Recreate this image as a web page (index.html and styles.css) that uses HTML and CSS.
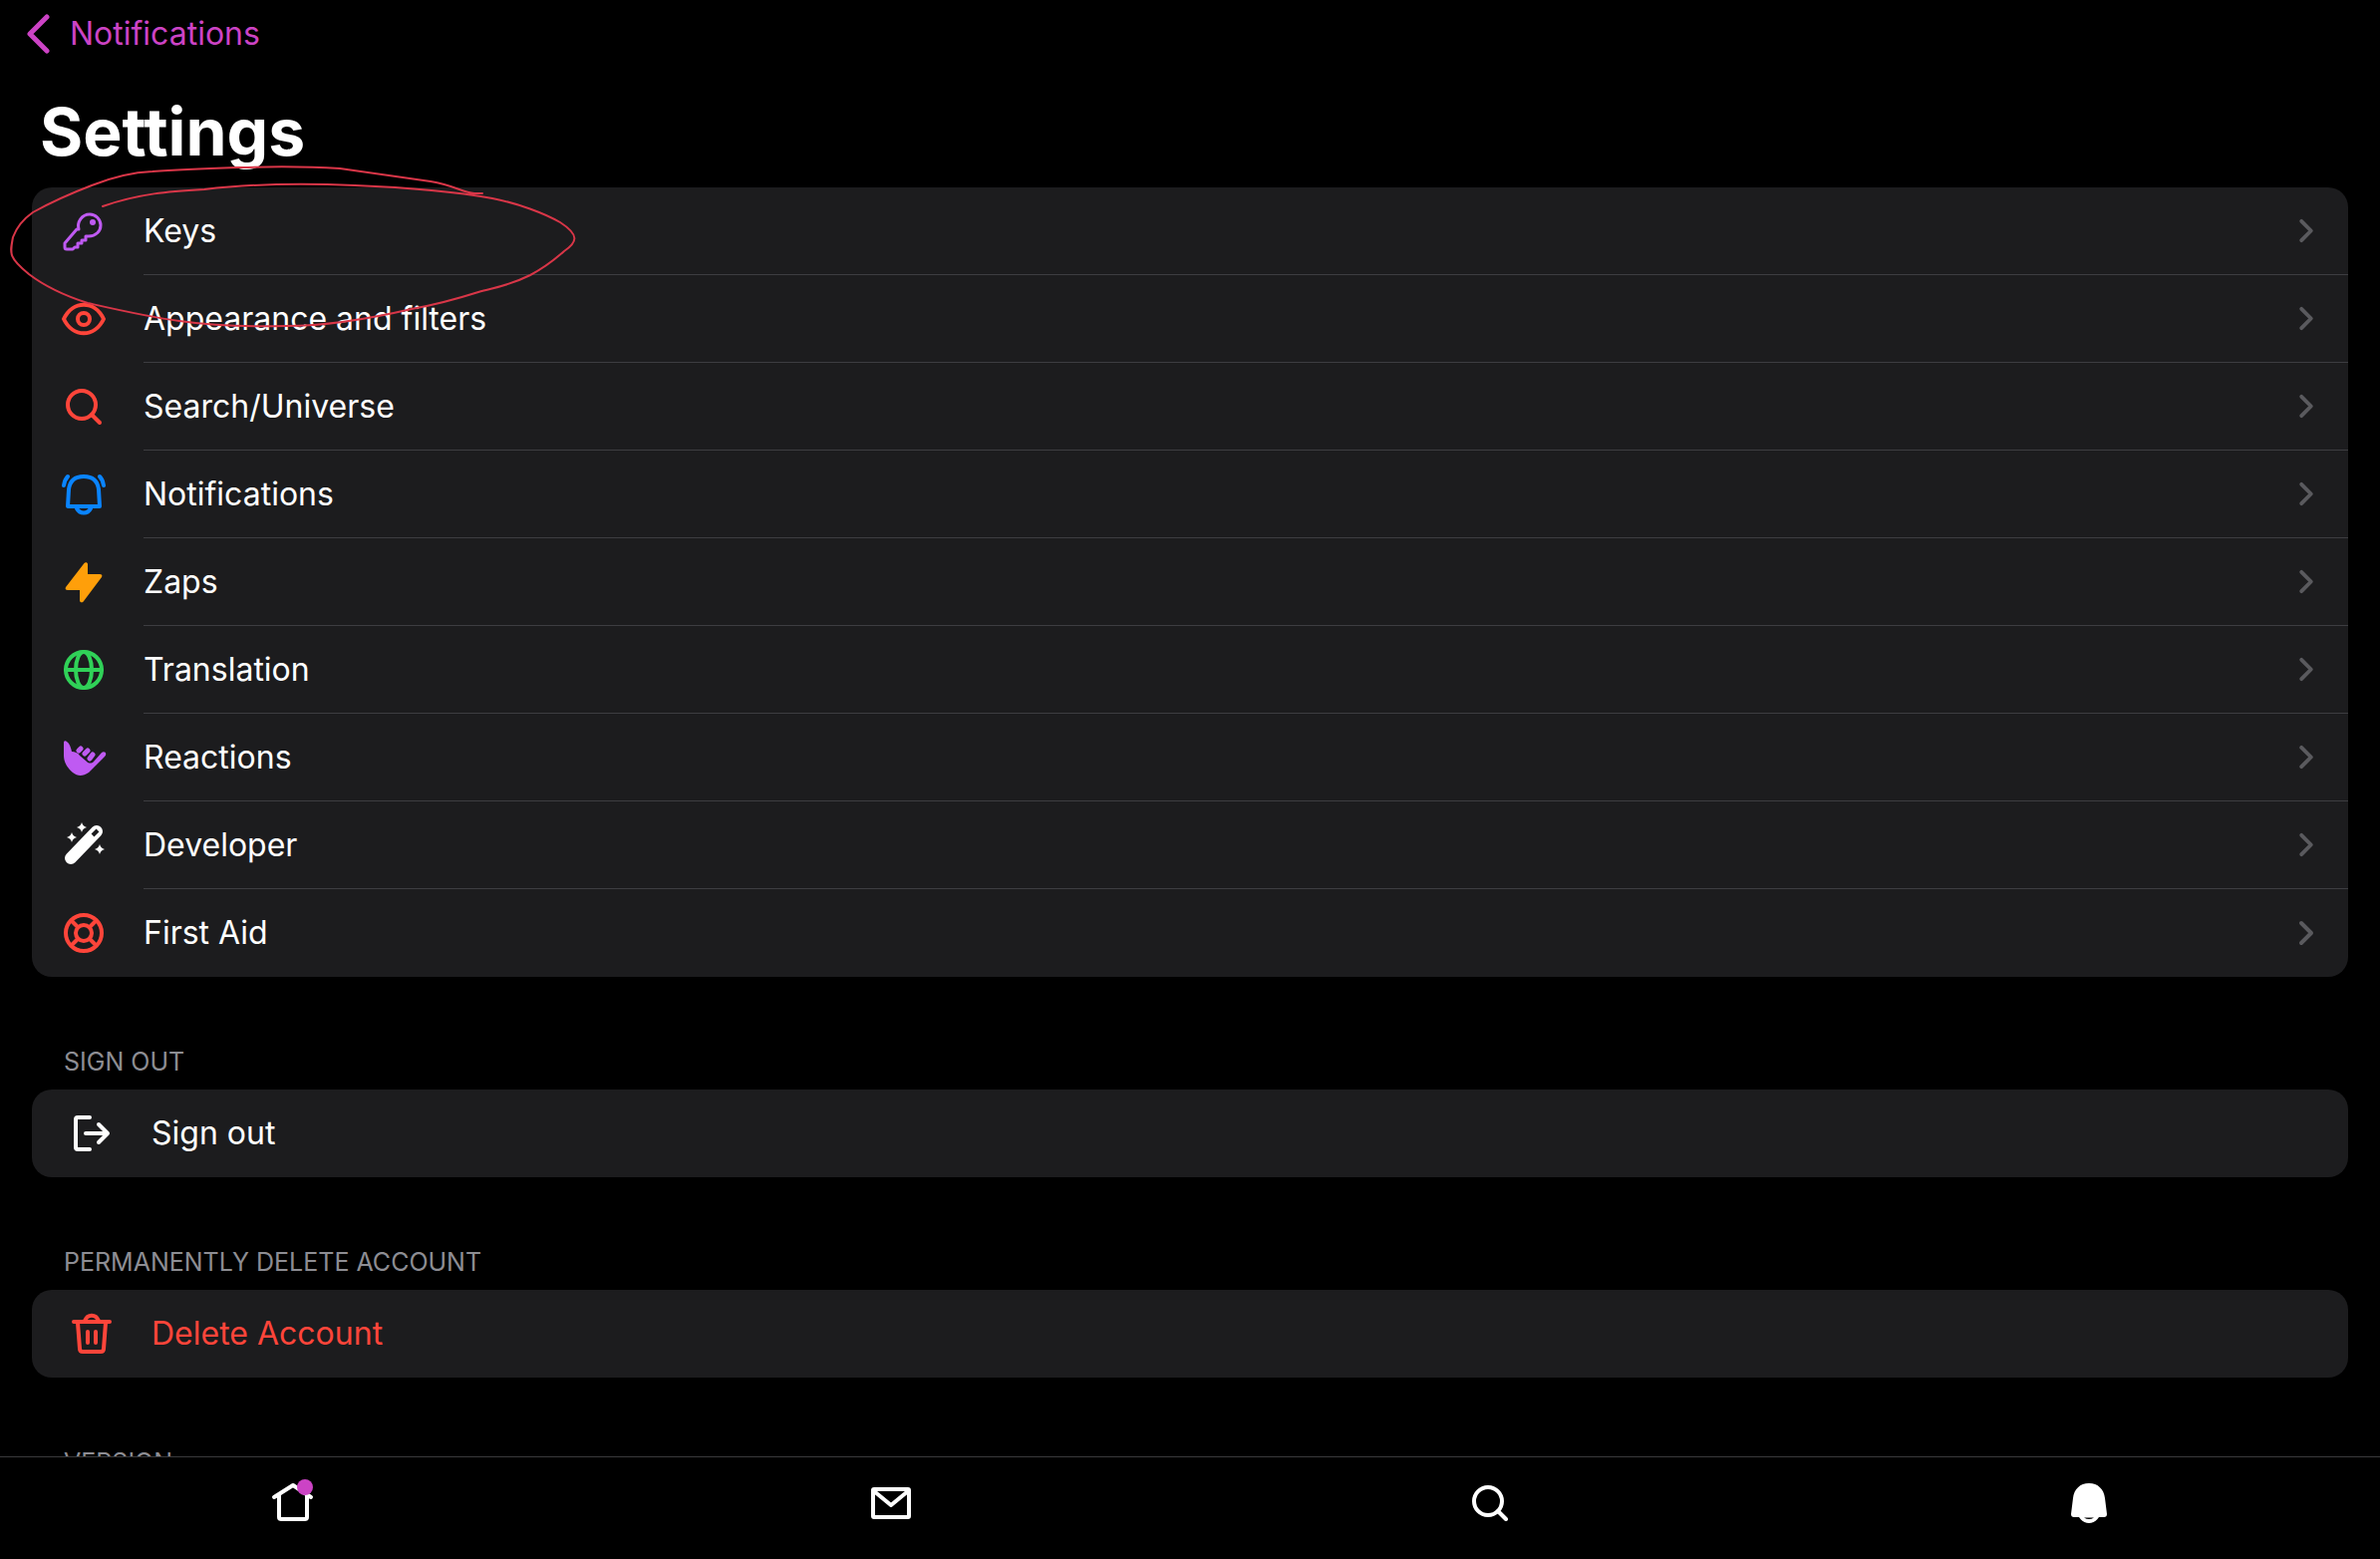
FILE: index.html
```html
<!DOCTYPE html>
<html lang="en">
<head>
  <meta charset="UTF-8">
  <meta name="viewport" content="width=device-width, initial-scale=1.0">
  <title>Settings</title>
  <link rel="stylesheet" href="styles.css">
</head>
<body>
  <!-- shared chevron -->
  <svg class="defs" aria-hidden="true">
    <symbol id="chevron" viewBox="0 0 16 26"><path d="M3 3l10 10L3 23" fill="none" stroke="currentColor" stroke-width="4" stroke-linecap="round" stroke-linejoin="round"/></symbol>
  </svg>

  <main class="content">
    <a class="back" href="#notifications">
      <svg class="back-icon" viewBox="0 0 24 40"><path d="M21 3L4 20l17 17"/></svg>
      Notifications
    </a>
    <h1>Settings</h1>

    <nav class="card" aria-label="Settings">
      <a class="row purple" href="#keys">
        <svg class="icon" viewBox="0 0 48 48"><path class="thin" d="M19 22c-2-7 3-15 11-15 6 0 11 5 11 11s-5 11-12 11l-3 0v4h-4v3h-4v4h-3l-2 2h-6q-2 0-2-2v-4l12-14z"/><circle class="fill" cx="33" cy="15" r="3"/></svg>
        <span class="label">Keys</span><svg class="chevron"><use href="#chevron"/></svg>
      </a>
      <a class="row red" href="#appearance">
        <svg class="icon" viewBox="0 0 48 48"><path d="M4 24C13 5 35 5 44 24 35 43 13 43 4 24z"/><circle cx="24" cy="24" r="6"/></svg>
        <span class="label">Appearance and filters</span><svg class="chevron"><use href="#chevron"/></svg>
      </a>
      <a class="row red" href="#search">
        <svg class="icon" viewBox="0 0 48 48"><circle cx="22" cy="22" r="14"/><path d="M32 32l8 8"/></svg>
        <span class="label">Search/Universe</span><svg class="chevron"><use href="#chevron"/></svg>
      </a>
      <a class="row blue" href="#alerts">
        <svg class="icon" viewBox="0 0 48 48"><path d="M24 6c-9 0-14 5-15 13L8 36h32l-1-17C38 11 33 6 24 6zM17 38c3 6 11 6 14 0M8 6q-3 3-4 9M40 6q3 3 4 9"/></svg>
        <span class="label">Notifications</span><svg class="chevron"><use href="#chevron"/></svg>
      </a>
      <a class="row orange" href="#zaps">
        <svg class="icon" viewBox="0 0 48 48"><path class="fill" d="M24.500 5c1-1.500 3.500-1 3.500 1v10h12c2 0 3 1 2 3L24 43c-1 2-4 1.500-4-.5V32H8c-2 0-3-1-2-3z"/></svg>
        <span class="label">Zaps</span><svg class="chevron"><use href="#chevron"/></svg>
      </a>
      <a class="row green" href="#translation">
        <svg class="icon" viewBox="0 0 48 48"><circle cx="24" cy="24" r="18"/><ellipse cx="24" cy="24" rx="8" ry="18"/><path d="M6 24h36"/></svg>
        <span class="label">Translation</span><svg class="chevron"><use href="#chevron"/></svg>
      </a>
      <a class="row purple" href="#reactions">
        <svg class="icon" viewBox="0 0 48 48"><path class="fill" d="M4 9c0-2 2-2 3-1 3 2 4 6 5 10 3 0 6 1 8 4l7 6c2 2 5 2 7 0l8-9c3-2 6 1 3 4L29 39c-6 4-11 4-16 0C5 32 4 26 4 21z"/><path class="finger" d="M19 17l2-2M25 20l3-3M30 25l3-4"/></svg>
        <span class="label">Reactions</span><svg class="chevron"><use href="#chevron"/></svg>
      </a>
      <a class="row" href="#developer">
        <svg class="icon" viewBox="0 0 48 48"><path class="wand" d="M11 37l26-27"/><path class="slot" d="M33 14l5-5"/><path class="fill" d="M22 1q1 4 5 5-4 1-5 5-1-4-5-5 4-1 5-5zM12 11q1 4 5 5-4 1-5 5-1-4-5-5 4-1 5-5zM40 23q1 4 5 5-4 1-5 5-1-4-5-5 4-1 5-5z"/></svg>
        <span class="label">Developer</span><svg class="chevron"><use href="#chevron"/></svg>
      </a>
      <a class="row red" href="#first-aid">
        <svg class="icon" viewBox="0 0 48 48"><circle cx="24" cy="24" r="18"/><circle cx="24" cy="24" r="8"/><path d="M12 12l6 6M36 12l-6 6M12 36l6-6M36 36l-6-6"/></svg>
        <span class="label">First Aid</span><svg class="chevron"><use href="#chevron"/></svg>
      </a>
    </nav>

    <h2>SIGN OUT</h2>
    <div class="card">
      <button class="row action" type="button">
        <svg class="icon" viewBox="0 0 48 48"><path d="M22 8H10q-2 0-2 2v28q0 2 2 2h12M18 24h22M31 15l9 9-9 9"/></svg>
        <span class="label">Sign out</span>
      </button>
    </div>

    <h2>PERMANENTLY DELETE ACCOUNT</h2>
    <div class="card">
      <button class="row action danger" type="button">
        <svg class="icon" viewBox="0 0 48 48"><path d="M6 12h36M17 11c3-7 11-7 14 0M10 13l2 26q0 3 3 3h18q3 0 3-3l2-26M20 22v11M28 22v11"/></svg>
        <span class="label">Delete Account</span>
      </button>
    </div>

    <h2>VERSION</h2>

    <!-- hand drawn circle around Keys -->
    <svg class="scribble" viewBox="0 0 600 350" aria-hidden="true"><path d="M103 207C140 194 170 192 205 190C255 184 310 184 356 186C405 188 455 192 494 199C520 204 546 214 562 223C582 236 579 243 566 252C557 260 545 269 532 276C510 287 498 288 480 293C458 300 435 306 413 310C370 320 330 327 287 327C250 328 215 327 180 322C149 318 119 311 88 304C66 297 46 288 29 275C8 258 10 254 13 238C17 227 23 220 33 213C51 203 71 194 92 186C112 178 130 173 153 172C182 170 212 169 241 168C275 167 309 167 341 169C371 173 402 178 432 182C456 186 464 193 476 194L484 194"/></svg>
  </main>

  <footer class="tabbar">
    <nav class="tabs" aria-label="Tabs">
      <button class="tab" type="button" aria-label="Home">
        <svg class="icon" viewBox="0 0 48 48"><path d="M6 18L25 6l18 12M11 16v22q0 2 2 2h24q2 0 2-2V16"/><circle class="dot" cx="37" cy="8" r="8"/></svg>
      </button>
      <button class="tab" type="button" aria-label="Messages">
        <svg class="icon" viewBox="0 0 48 48"><rect x="6" y="10" width="36" height="28" rx="1"/><path d="M7 12l17 14 17-14"/></svg>
      </button>
      <button class="tab" type="button" aria-label="Search">
        <svg class="icon" viewBox="0 0 48 48"><circle cx="22" cy="22" r="14"/><path d="M32 32l8 8"/></svg>
      </button>
      <button class="tab" type="button" aria-label="Notifications">
        <svg class="icon" viewBox="0 0 48 48"><path class="fill" d="M24 4C15 4 9 10 8 19L6 35q0 3 3 3h5c5 8 15 8 20 0h5q3 0 3-3l-2-16C39 10 33 4 24 4zM19 38.500h10q-5 3-10 0z"/></svg>
      </button>
    </nav>
  </footer>
</body>
</html>
```

FILE: styles.css
```css
* {
  box-sizing: border-box;
}
body {
  margin: 0;
  height: 100vh;
  display: flex;
  flex-direction: column;
  background-color: #000;
  color: #fff;
  font-family: Inter, "Liberation Sans", sans-serif;
  font-size: 32px;
  line-height: 40px;
}
.defs {
  display: none;
}
.content {
  position: relative;
  flex: 1;
  min-height: 0;
  overflow: hidden;
  padding: 0 32px;
}
a {
  color: inherit;
  text-decoration: none;
}
.back {
  display: flex;
  align-items: center;
  gap: 20px;
  height: 68px;
  margin-left: -6px;
  color: #cc43c5;
}
.back-icon {
  width: 24px;
  height: 40px;
  fill: none;
  stroke: currentColor;
  stroke-width: 5px;
  stroke-linecap: round;
  stroke-linejoin: round;
}
h1 {
  margin: 24px 8px 16px;
  font-size: 66px;
  line-height: 80px;
  font-weight: 700;
}
h2 {
  margin: 0 32px;
  padding-top: 68px;
  height: 113px;
  font-size: 25px;
  line-height: 34px;
  font-weight: 400;
  color: #8d8d93;
}
.card {
  background-color: #1c1c1e;
  border-radius: 20px;
  overflow: hidden;
}
.row {
  display: flex;
  align-items: center;
  gap: 36px;
  width: 100%;
  height: 88px;
  padding-left: 28px;
}
.row .label {
  flex: 1;
  height: 88px;
  line-height: 88px;
  text-align: left;
}
.row .chevron {
  width: 66px;
  height: 88px;
  padding: 31px 34px 31px 16px;
  margin-left: -36px;
  color: #5a5a5e;
}
.row:not(:last-child) .label,
.row:not(:last-child) .chevron {
  border-bottom: 1px solid #3d3d41;
}
.icon {
  flex: none;
  width: 48px;
  height: 48px;
  fill: none;
  stroke: currentColor;
  stroke-width: 4px;
  stroke-linecap: round;
  stroke-linejoin: round;
}
.icon .thin {
  stroke-width: 3px;
}
.icon .fill {
  fill: currentColor;
  stroke: none;
}
.icon .finger {
  stroke-width: 5px;
}
.icon .wand {
  stroke-width: 12px;
}
.icon .slot {
  stroke: #1c1c1e;
  stroke-linecap: butt;
}
.purple .icon {
  color: #bf5af2;
}
.red .icon {
  color: #ff453a;
}
.blue .icon {
  color: #0a84ff;
}
.orange .icon {
  color: #ff9f0a;
}
.green .icon {
  color: #30d158;
}
button {
  border: none;
  background: none;
  color: inherit;
  font: inherit;
  cursor: pointer;
}
.action {
  padding: 0 36px;
}
.danger {
  color: #ff453a;
}
.scribble {
  position: absolute;
  top: 0;
  left: 0;
  width: 600px;
  height: 350px;
  fill: none;
  stroke: #d93648;
  stroke-width: 2px;
  stroke-linecap: round;
  stroke-linejoin: round;
  pointer-events: none;
}
.tabbar {
  height: 103px;
  overflow: hidden;
  border-top: 1px solid #3a3a3c;
}
.tabs {
  display: grid;
  grid-template-columns: repeat(4, 1fr);
  margin: 0 -8px;
}
.tab {
  display: flex;
  justify-content: center;
  padding: 22px 0;
}
.icon .dot {
  fill: #cc43c5;
  stroke: none;
}
```
